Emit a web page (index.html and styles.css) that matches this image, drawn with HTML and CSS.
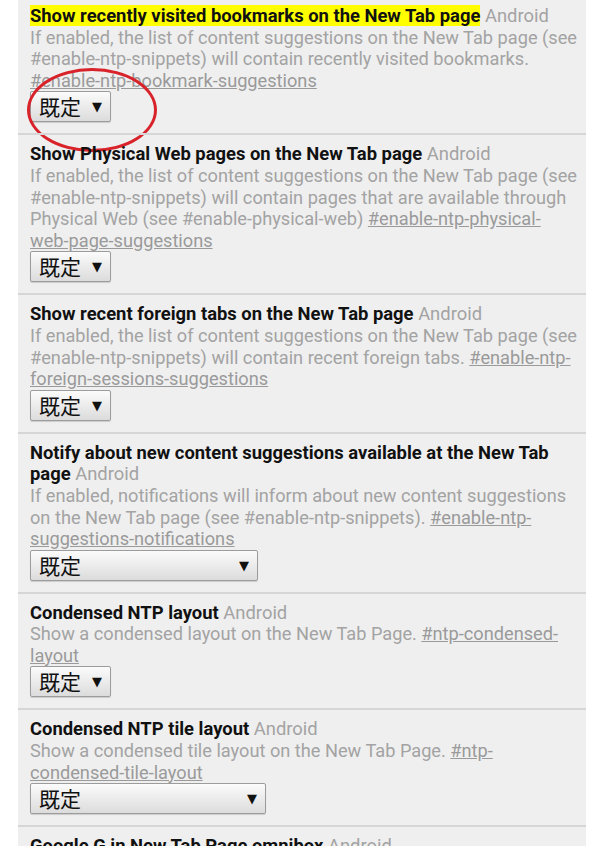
FILE: index.html
```html
<!DOCTYPE html>
<html lang="ja">
<head>
    <meta charset="UTF-8">
    <meta name="viewport" content="width=device-width, initial-scale=1.0">
    <title>chrome://flags</title>
    <link rel="stylesheet" href="styles.css">
</head>
<body>
    <!-- Lista de flags -->
    <div class="flags">
        <div class="flag first">
            <div class="flag-title"><span class="mark">Show recently visited bookmarks on the New Tab page</span> <span class="platform">Android</span></div>
            <div class="flag-desc">If enabled, the list of content suggestions on the New Tab page (see #enable-ntp-snippets) will contain recently visited bookmarks. <a href="#">#enable-ntp-bookmark-suggestions</a></div>
            <div class="select"><span>既定</span><span class="arrow">▼</span></div>
            <!-- círculo rojo de la captura -->
            <div class="circle-mark"></div>
        </div>

        <div class="flag">
            <div class="flag-title">Show Physical Web pages on the New Tab page <span class="platform">Android</span></div>
            <div class="flag-desc">If enabled, the list of content suggestions on the New Tab page (see #enable-ntp-snippets) will contain pages that are available through Physical Web (see #enable-physical-web) <a href="#">#enable-ntp-physical-<span class="nowrap">web-page-suggestions</span></a></div>
            <div class="select"><span>既定</span><span class="arrow">▼</span></div>
        </div>

        <div class="flag">
            <div class="flag-title">Show recent foreign tabs on the New Tab page <span class="platform">Android</span></div>
            <div class="flag-desc">If enabled, the list of content suggestions on the New Tab page (see #enable-ntp-snippets) will contain recent foreign tabs. <a href="#">#enable-ntp-foreign-sessions-suggestions</a></div>
            <div class="select"><span>既定</span><span class="arrow">▼</span></div>
        </div>

        <div class="flag">
            <div class="flag-title">Notify about new content suggestions available at the New Tab page <span class="platform">Android</span></div>
            <div class="flag-desc">If enabled, notifications will inform about new content suggestions on the New Tab page (see #enable-ntp-snippets). <a href="#">#enable-ntp-suggestions-notifications</a></div>
            <div class="select wide"><span>既定</span><span class="arrow">▼</span></div>
        </div>

        <div class="flag">
            <div class="flag-title">Condensed NTP layout <span class="platform">Android</span></div>
            <div class="flag-desc">Show a condensed layout on the New Tab Page. <a href="#">#ntp-condensed-layout</a></div>
            <div class="select"><span>既定</span><span class="arrow">▼</span></div>
        </div>

        <div class="flag">
            <div class="flag-title">Condensed NTP tile layout <span class="platform">Android</span></div>
            <div class="flag-desc">Show a condensed tile layout on the New Tab Page. <a href="#">#ntp-condensed-tile-layout</a></div>
            <div class="select wider"><span>既定</span><span class="arrow">▼</span></div>
        </div>

        <div class="flag">
            <div class="flag-title">Google G in New Tab Page omnibox <span class="platform">Android</span></div>
            <div class="flag-desc">Show a Google G in the omnibox on the New Tab Page.</div>
        </div>
    </div>
</body>
</html>
```

FILE: styles.css
```css
/* Estilo Global */
body {
    margin: 0;
    padding: 0;
    background-color: #fff;
    font-family: Roboto, "Noto Sans CJK JP", sans-serif;
    font-size: 18.4px;
    line-height: 21.6px;
    color: #111;
    height: 846px;
    overflow: hidden;
}

.flags {
    width: 568px;
    margin-left: 18px;
    background-color: #efefef;
}

.flag {
    position: relative;
    padding: 8px 3px 11px 12px;
    border-top: 2px solid #d6d6d6;
}

.flag.first {
    border-top: none;
    padding-top: 5px;
}

.flag-title {
    font-weight: bold;
    color: #111;
}

.mark {
    background-color: #ffff00;
}

.platform {
    font-weight: normal;
    color: #a3a3a3;
}

.flag-desc {
    font-size: 18.2px;
    color: #a3a3a3;
}

.flag-desc a {
    color: #9a9a9a;
    text-decoration: underline;
}

.nowrap {
    white-space: nowrap;
}

/* Selector */
.select {
    box-sizing: border-box;
    width: 81px;
    height: 31px;
    padding: 0 8px;
    display: flex;
    align-items: center;
    justify-content: space-between;
    border: 1px solid #9c9c9c;
    border-radius: 2px;
    background: linear-gradient(#fbfbfb, #dcdcdc);
    box-shadow: 0 1px 1px rgba(0, 0, 0, 0.15);
    font-family: "Noto Sans CJK JP", sans-serif;
    font-size: 21px;
    line-height: 29px;
    color: #111;
}

.select .arrow {
    font-family: "DejaVu Sans", sans-serif;
    font-size: 13px;
}

.select.wide { width: 228px; }
.select.wider { width: 236px; }

/* Marca roja */
.circle-mark {
    position: absolute;
    left: 9px;
    top: 68px;
    width: 124px;
    height: 78px;
    border: 3px solid #d8232a;
    border-radius: 50%;
}
```
